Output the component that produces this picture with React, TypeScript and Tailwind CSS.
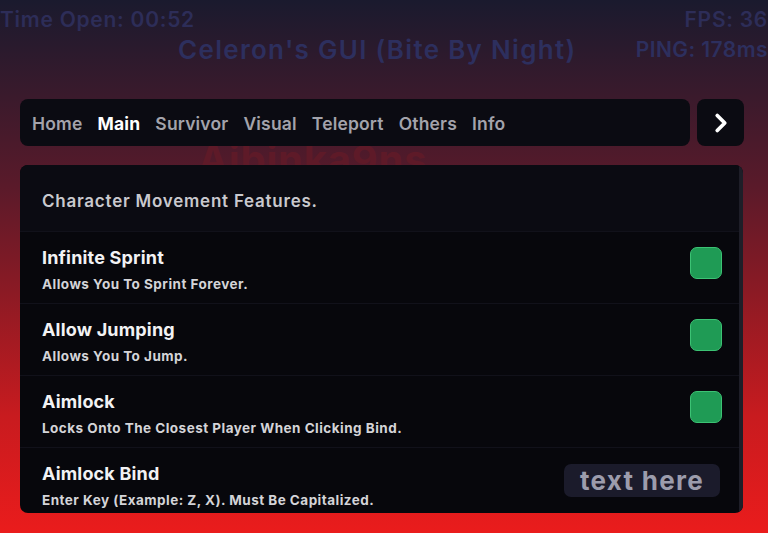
import React from "react";
import { ChevronRight } from "lucide-react";

interface Feature {
  title: string;
  description: string;
  kind: "toggle" | "input";
}

const tabs = ["Home", "Main", "Survivor", "Visual", "Teleport", "Others", "Info"];

const features: Feature[] = [
  { title: "Infinite Sprint", description: "Allows You To Sprint Forever.", kind: "toggle" },
  { title: "Allow Jumping", description: "Allows You To Jump.", kind: "toggle" },
  { title: "Aimlock", description: "Locks Onto The Closest Player When Clicking Bind.", kind: "toggle" },
  { title: "Aimlock Bind", description: "Enter Key (Example: Z, X). Must Be Capitalized.", kind: "input" },
];

const FeatureRow: React.FC<{ feature: Feature }> = ({ feature }) => (
  <div className="flex h-[72px] shrink-0 justify-between border-t border-[#11111a] pl-[22px] pr-[17px]">
    <div className="flex flex-col pt-[15px]">
      <span className="text-[18px] font-bold leading-[22px] tracking-[0.01em] text-[#f2f2f4]">
        {feature.title}
      </span>
      <span className="mt-[7px] text-[13.5px] font-bold leading-[16px] tracking-[0.035em] text-[#d4d4d8]">
        {feature.description}
      </span>
    </div>
    {feature.kind === "toggle" ? (
      <div className="mt-[15px] h-[32px] w-[32px] rounded-[7px] border border-[#3cc274] bg-[#1f9b55]" />
    ) : (
      <div className="mr-[2px] mt-[16px] flex h-[33px] w-[156px] items-center justify-center rounded-[7px] bg-[#1b1b2b] text-[26px] font-bold tracking-[0.05em] text-[#9c9cac]">
        text here
      </div>
    )}
  </div>
);

export default function App() {
  return (
    <div
      className="relative flex h-[533px] w-[768px] flex-col overflow-hidden bg-[linear-gradient(to_bottom,#1a1a2e_0%,#3a1a2c_18%,#5a1a2a_35%,#8c1a24_55%,#c81b1f_78%,#ea1c1c_100%)]"
      style={{ fontFamily: "Inter, 'Open Sans', sans-serif" }}
    >
      {/* player name drawn on the world behind the menu */}
      <div className="absolute left-[198px] top-[136px] z-0 text-[40px] font-bold leading-[48px] tracking-[0.02em] text-[#5e1a28]">
        Aibinka9ns
      </div>

      {/* overlay stats */}
      <div className="flex h-[34px] items-center justify-between whitespace-nowrap pt-[6px] text-[21px] font-semibold leading-[24px] tracking-[0.035em] text-[#2d2d58]">
        <span>Time Open: 00:52</span>
        <span>FPS: 36</span>
      </div>
      <div className="flex h-[32px] items-center whitespace-nowrap text-[21px] font-semibold leading-[24px] tracking-[0.02em] text-[#2d2f5e]">
        <span className="ml-[178px] text-[26px] tracking-[0.05em]">Celeron&apos;s GUI (Bite By Night)</span>
        <span className="ml-auto">PING: 178ms</span>
      </div>

      {/* tab bar */}
      <div className="relative z-10 ml-[20px] mr-[24px] mt-[33px] flex h-[47px] gap-[7px]">
        <nav className="flex flex-1 items-center gap-[15px] rounded-[8px] bg-[#0b0b12] pl-[12px] pt-[4px]">
          {tabs.map((tab) => (
            <span
              key={tab}
              className={
                tab === "Main"
                  ? "text-[17.5px] font-bold tracking-[0.01em] text-white"
                  : "text-[17.5px] font-semibold tracking-[0.01em] text-[#a3a3ab]"
              }
            >
              {tab}
            </span>
          ))}
        </nav>
        <button className="flex w-[47px] items-center justify-center rounded-[8px] bg-[#0b0b12] text-white">
          <ChevronRight size={30} strokeWidth={3} />
        </button>
      </div>

      {/* feature list */}
      <div className="relative z-10 ml-[20px] mr-[25px] mt-[19px] flex h-[348px] overflow-hidden rounded-[8px] bg-[#07070c]">
        <div className="flex flex-1 flex-col">
          <div className="flex h-[66px] shrink-0 items-center bg-[#0b0b12] pl-[22px] pt-[8px] text-[17px] font-semibold tracking-[0.045em] text-[#c9c9ce]">
            Character Movement Features.
          </div>
          {features.map((f) => (
            <FeatureRow key={f.title} feature={f} />
          ))}
        </div>
        <div className="w-[4px] bg-[#1e1e28]" />
      </div>
    </div>
  );
}
